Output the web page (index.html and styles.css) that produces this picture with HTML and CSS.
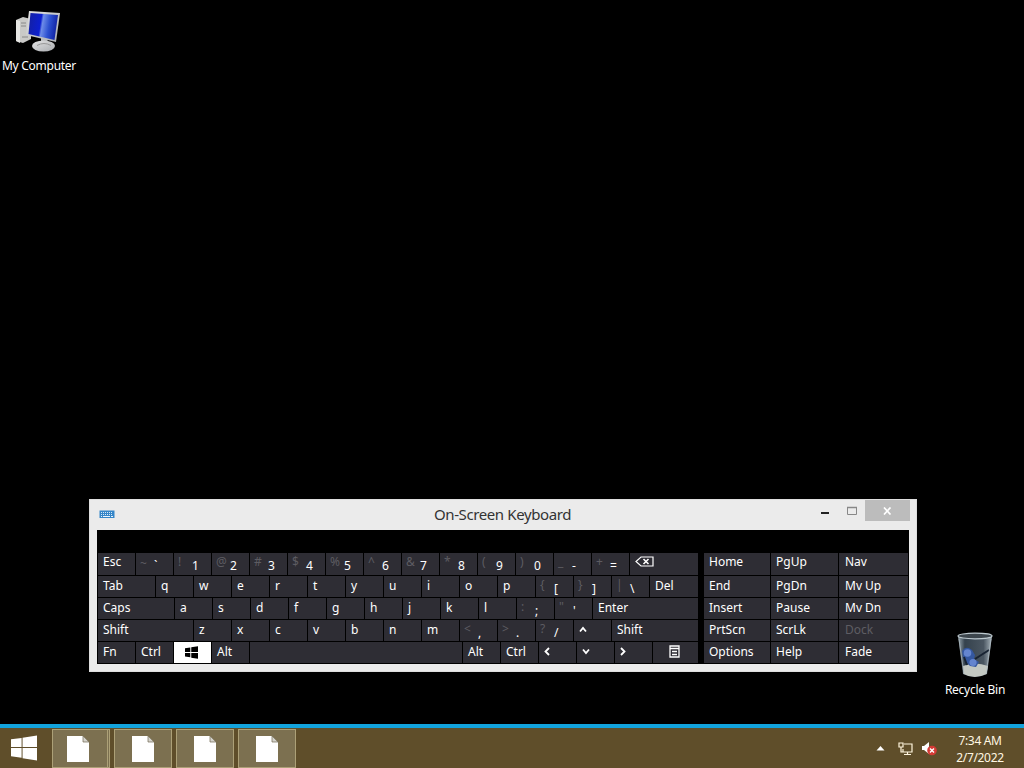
FILE: index.html
```html
<!DOCTYPE html>
<html lang="en">
<head>
<meta charset="utf-8">
<title>Desktop</title>
<link rel="stylesheet" href="styles.css">
</head>
<body>
<main class="desktop">
  <div class="shortcut computer">
    <svg width="48" height="44" viewBox="0 0 48 44">
      <defs>
        <linearGradient id="scr" x1="0" y1="0" x2="1" y2="0.15"><stop offset="0" stop-color="#1420a0"/><stop offset=".45" stop-color="#0c1fd0"/><stop offset=".52" stop-color="#6d8ce8"/><stop offset=".75" stop-color="#2c50d0"/><stop offset="1" stop-color="#1226a8"/></linearGradient>
        <linearGradient id="met" x1="0" y1="0" x2="1" y2="1"><stop offset="0" stop-color="#e4e4e4"/><stop offset="1" stop-color="#a9acb0"/></linearGradient>
      </defs>
      <path d="M1 12l7-3 8 2v20l-8 4-7-2z" fill="#c9c9c7"/>
      <path d="M1 12l4 1v22l-4-2z" fill="#e6e6e4"/>
      <path d="M6 15h5M6 18h5M7 29h6" stroke="#888" fill="none"/>
      <path d="M26 28l7 2-1 6h-6z" fill="#b9bbbd"/>
      <ellipse cx="28.500" cy="38" rx="11.500" ry="5.500" fill="url(#met)"/>
      <path d="M22 37.500q7-4 14 0" fill="none" stroke="#999"/>
      <path d="M14 3l31 2-4 29-30-7z" fill="url(#met)"/>
      <path d="M15.500 5l27.500 2-3.500 25-26-6z" fill="url(#scr)"/>
    </svg>
    <span class="caption">My Computer</span>
  </div>

  <div class="shortcut bin">
    <svg width="44" height="50" viewBox="0 0 44 50">
      <defs><linearGradient id="glass"><stop offset="0" stop-color="#9aa8b0"/><stop offset=".2" stop-color="#35424d"/><stop offset=".75" stop-color="#4a5661"/><stop offset="1" stop-color="#aab6bd"/></linearGradient></defs>
      <path d="M5 6h34l-5 38q-12 6-24 0z" fill="url(#glass)"/>
      <path d="M10 36q12-5 25 0l-1.500 8q-12 6-23 0z" fill="#c3c8c2"/>
      <path d="M9 21q4-6 10-1l3 5-1 4 5 3-3 5-6-1-4-4-3-4z" fill="#34579f"/>
      <circle cx="14.500" cy="23" r="3.800" fill="#6485cf"/>
      <circle cx="20" cy="32.500" r="3.600" fill="#6485cf"/>
      <path d="M22 29l14-9M11 27l3 8" stroke="#182332" stroke-width="2"/>
      <ellipse cx="22" cy="6" rx="17" ry="2.800" fill="#3d464d" stroke="#bcc8ce" stroke-width="1.200"/>
      <path d="M6 9l5 35M38 9l-5 35" stroke="#b4c0c6" fill="none" opacity=".6"/>
    </svg>
    <span class="caption">Recycle Bin</span>
  </div>

  <section class="window">
    <header class="titlebar">
      <svg class="app-icon" width="16" height="9" viewBox="0 0 16 9"><path d="M.500 .500h15v7.500H.500z" fill="#3586c8"/><path d="M2 2.500h12M2 4.500h12" stroke="#d5e8f7" stroke-dasharray="1 1"/><path d="M2 6.500h1m1 0h7m1 0h2" stroke="#eaf3fb"/></svg>
      <h1 class="title">On-Screen Keyboard</h1>
      <div class="controls">
        <span class="control"><svg width="10" height="10"><path d="M1 7h8" stroke="#222" stroke-width="2"/></svg></span>
        <span class="control"><svg width="12" height="10"><path d="M1.500 1.500h9v7h-9z" fill="none" stroke="#888"/><path d="M1 1.500h10" stroke="#888" stroke-width="1.500"/></svg></span>
        <span class="control close"><svg width="9" height="8"><path d="M1 .5l6.500 7M7.500.5L1 7.500" stroke="#fff" stroke-width="1.700"/></svg></span>
      </div>
    </header>
    <div class="keyboard">
      <div class="main-keys">
        <div class="row"><span class="key">Esc</span><span class="key dual"><i class="sunk">~</i><b>`</b></span><span class="key dual"><i>!</i><b>1</b></span><span class="key dual"><i>@</i><b>2</b></span><span class="key dual"><i>#</i><b>3</b></span><span class="key dual"><i>$</i><b>4</b></span><span class="key dual"><i>%</i><b>5</b></span><span class="key dual"><i>^</i><b>6</b></span><span class="key dual"><i>&amp;</i><b>7</b></span><span class="key dual"><i>*</i><b>8</b></span><span class="key dual"><i>(</i><b>9</b></span><span class="key dual"><i>)</i><b>0</b></span><span class="key dual"><i>_</i><b>-</b></span><span class="key dual"><i>+</i><b>=</b></span><span class="key grow"><svg class="backspace" width="19" height="12"><path d="M6 1h12v9H6L1 5.500z" fill="none" stroke="#fff" stroke-width="1.200"/><path d="M8.500 3l5 5m0-5l-5 5" stroke="#fff" stroke-width="1.600"/></svg></span></div>
        <div class="row"><span class="key tab">Tab</span><span class="key">q</span><span class="key">w</span><span class="key">e</span><span class="key">r</span><span class="key">t</span><span class="key">y</span><span class="key">u</span><span class="key">i</span><span class="key">o</span><span class="key">p</span><span class="key dual"><i>{</i><b>[</b></span><span class="key dual"><i>}</i><b>]</b></span><span class="key dual"><i>|</i><b>\</b></span><span class="key grow">Del</span></div>
        <div class="row"><span class="key caps">Caps</span><span class="key">a</span><span class="key">s</span><span class="key">d</span><span class="key">f</span><span class="key">g</span><span class="key">h</span><span class="key">j</span><span class="key">k</span><span class="key">l</span><span class="key dual"><i>:</i><b>;</b></span><span class="key dual"><i>"</i><b>'</b></span><span class="key grow">Enter</span></div>
        <div class="row"><span class="key shift">Shift</span><span class="key">z</span><span class="key">x</span><span class="key">c</span><span class="key">v</span><span class="key">b</span><span class="key">n</span><span class="key">m</span><span class="key dual"><i>&lt;</i><b>,</b></span><span class="key dual"><i>&gt;</i><b>.</b></span><span class="key dual"><i>?</i><b>/</b></span><span class="key"><svg class="arrow" width="8" height="12"><path d="M1 7.500L4 4l3 3.500"/></svg></span><span class="key grow">Shift</span></div>
        <div class="row"><span class="key">Fn</span><span class="key">Ctrl</span><span class="key lit"><svg width="13" height="13" viewBox="0 0 27 26"><path d="M0 4l11-1.500V12H0zM13 2.300L27 0v12H13zM0 14h11v9L0 21.500zM13 14h14v12l-14-2.300z"/></svg></span><span class="key">Alt</span><span class="key space"></span><span class="key">Alt</span><span class="key">Ctrl</span><span class="key"><svg class="arrow" width="8" height="12"><path d="M5 2L1.500 5.500 5 9"/></svg></span><span class="key"><svg class="arrow" width="8" height="12"><path d="M1 3.500L4 7l3-3.500"/></svg></span><span class="key"><svg class="arrow" width="8" height="12"><path d="M1 2l3.500 3.500L1 9"/></svg></span><span class="key grow menu"><svg width="11" height="13"><path d="M1 1h9v11H1zM1 3.500h9M3 6.500h5M3 9.500h5" fill="none" stroke="#fff" stroke-width="1.300"/></svg></span></div>
      </div>
      <div class="side-keys">
        <span class="key top">Home</span><span class="key top">PgUp</span><span class="key top third">Nav</span>
        <span class="key">End</span><span class="key">PgDn</span><span class="key third">Mv Up</span>
        <span class="key">Insert</span><span class="key">Pause</span><span class="key third">Mv Dn</span>
        <span class="key">PrtScn</span><span class="key">ScrLk</span><span class="key third off">Dock</span>
        <span class="key">Options</span><span class="key">Help</span><span class="key third">Fade</span>
      </div>
    </div>
  </section>
</main>

<footer class="taskbar">
  <span class="start"><svg width="26" height="26" viewBox="0 0 27 26"><path d="M0 4l11-1.500V12H0zM12 2.300L27 0v12H12zM0 13h11v10L0 21.500zM12 13h15v13l-15-2.300z" fill="#fff"/></svg></span>
  <div class="tasks">
    <span class="task stacked"><svg width="24" height="28"><use href="#page"/></svg></span>
    <span class="task"><svg width="24" height="28"><use href="#page"/></svg></span>
    <span class="task"><svg width="24" height="28"><use href="#page"/></svg></span>
    <span class="task"><svg width="24" height="28"><g id="page"><path d="M1 1h16l6 6v20H1z" fill="#fff"/><path d="M17 1v6h6z" fill="#d5d3cc" stroke="#716850" stroke-width=".7"/></g></svg></span>
  </div>
  <div class="tray">
    <svg width="9" height="5"><path d="M.5 4.500L4.500 0l4 4.500z" fill="#fff"/></svg>
    <svg class="network" width="15" height="14" fill="none" stroke="#fff5dd" stroke-width="1.200"><path d="M6 2h8v8H5V7M6 12.500h7M9.500 10v2.500M1 1h4v4H1zM3 5v5h2"/></svg>
    <svg class="sound" width="15" height="15"><path d="M0 5h2l5-4v12L2 9H0z" fill="#fff"/><circle cx="10" cy="9.500" r="4.800" fill="#d43a35"/><path d="M8 7.500l4 4m0-4l-4 4" stroke="#fff" stroke-width="1.400"/></svg>
    <div class="clock"><span>7:34 AM</span><span>2/7/2022</span></div>
  </div>
</footer>
</body>
</html>
```

FILE: styles.css
```css
* { box-sizing: border-box; }
body {
  margin: 0;
  width: 1024px;
  height: 768px;
  display: flex;
  flex-direction: column;
  overflow: hidden;
  background: #000;
  color: #fff;
  font: 12px/16px "Noto Sans", "Open Sans", sans-serif;
}
svg { display: block; flex: none; }
.desktop { position: relative; flex: 1; }

.shortcut { position: absolute; display: flex; flex-direction: column; align-items: center; width: 78px; }
.computer { left: 0; top: 8px; }
.computer .caption { margin-top: 6px; }
.bin { left: 936px; top: 630px; }
.bin .caption { margin-top: 2px; }
.caption { white-space: nowrap; letter-spacing: -0.27px; }

.window {
  position: absolute;
  left: 89px;
  top: 499px;
  width: 828px;
  height: 173px;
  padding: 0 7px 7px;
  background: #ebebeb;
  border: 1px solid #dedede;
}
.titlebar { display: grid; grid-template-columns: 100px 1fr 100px; height: 30px; }
.app-icon { margin: 10px 0 0 2px; }
.title { margin: 3px 1px 0 0; color: #333; font-size: 15px; font-weight: 400; line-height: 22px; letter-spacing: -0.39px; text-align: center; }
.controls { display: flex; justify-content: flex-end; }
.control { display: grid; place-items: center; width: 27px; height: 21px; }
.close { width: 45px; background: #bcbcbc; }
.controls .close { margin-right: -1px; }

.keyboard { display: flex; gap: 6px; height: 134px; padding: 23px 0 0 1px; background: #000; }
.main-keys { display: flex; flex-direction: column; gap: 1px; width: 600px; }
.row { display: flex; gap: 1px; height: 21px; }
.row:first-child { height: 22px; }
.key {
  display: block;
  flex: none;
  width: 37px;
  padding: 2px 0 0 5px;
  background: #2e2d34;
  line-height: 16px;
  white-space: nowrap;
  overflow: hidden;
}
.row:first-child .key, .side-keys .top { padding-top: 1px; }
.row .grow { flex: 1; }
.row .tab { width: 57px; }
.row .caps { width: 76px; }
.row .shift { width: 95px; }
.row .space { width: 212px; }
.row .dual, .row:first-child .dual { display: flex; padding: 0 0 0 4px; }
.dual i { width: 14px; padding-top: 1px; color: #5d5c62; font-style: normal; }
.dual .sunk { padding-top: 3px; }
.dual b { padding-top: 5px; font-weight: 400; }
.row .lit { display: grid; place-items: center; padding: 0 2px 0 0; background: #fff; }
.row .menu { padding: 3px 0 0 16px; }
.backspace { margin-top: 2px; }
.arrow { margin: 2px 0 0; fill: none; stroke: #fff; stroke-width: 1.8; }

.side-keys {
  display: grid;
  grid-template-columns: 66px 67px 69px;
  grid-template-rows: 22px repeat(4, 21px);
  gap: 1px;
}
.side-keys .key { width: auto; }
.side-keys .third { padding-left: 6px; }
.off { color: #5e5d63; }

.taskbar { display: flex; height: 44px; border-top: 4px solid #12a3dc; background: #5f4e2a; }
.start { display: grid; place-items: center; width: 48px; }
.tasks { display: flex; gap: 4px; padding: 1px 0 0 4px; }
.task { display: grid; place-items: center; width: 58px; height: 39px; background: #7c7050; border: 1px solid #aca077; }
.stacked { border-right: 3px double #aca077; padding-right: 4px; }
.tray { display: flex; flex: 1; align-items: center; justify-content: flex-end; padding: 1px 15px 0 0; }
.network { margin-left: 13px; }
.sound { margin-left: 9px; }
.clock { display: flex; flex-direction: column; align-items: center; width: 58px; margin-left: 14px; padding-top: 1px; line-height: 17px; letter-spacing: -0.35px; color: #fff7e3; }
```
